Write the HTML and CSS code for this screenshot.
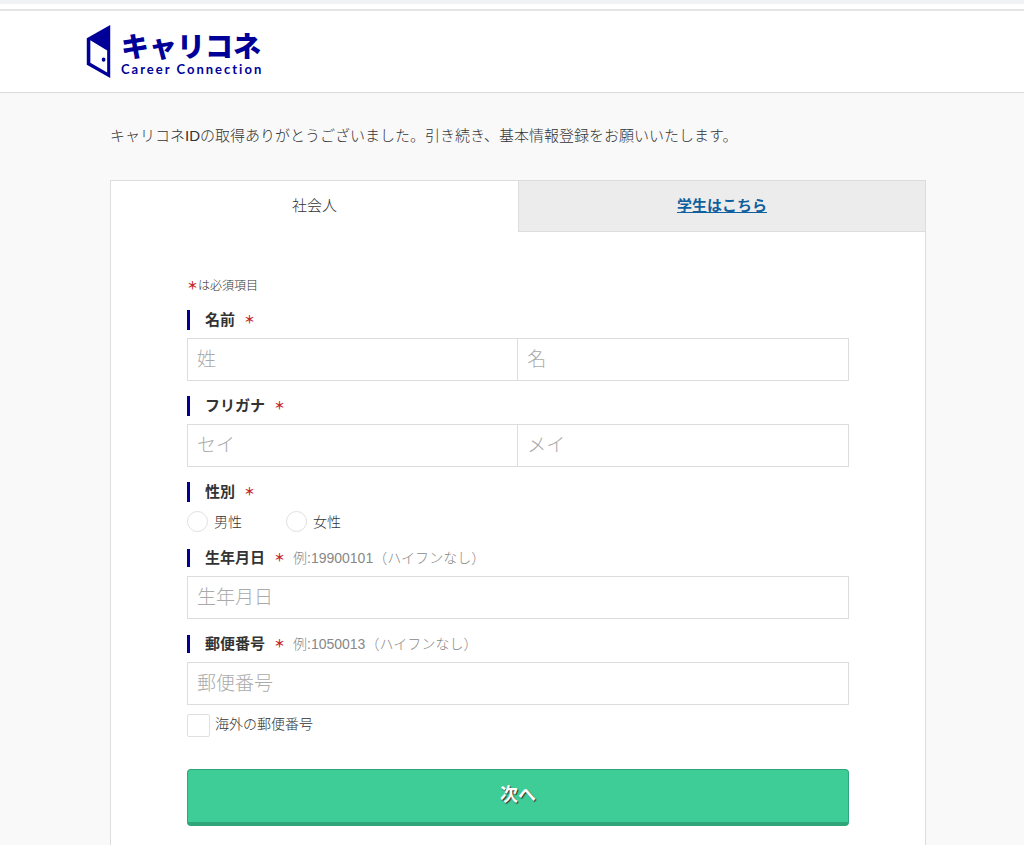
FILE: index.html
```html
<!DOCTYPE html>
<html lang="ja">
<head>
<meta charset="utf-8">
<meta name="viewport" content="width=device-width, initial-scale=1">
<title>キャリコネ 基本情報登録</title>
<link rel="stylesheet" href="styles.css">
</head>
<body>
<div class="top-strip"></div>
<header class="header">
  <a class="logo" href="#">
    <svg class="logo-door" viewBox="0 0 24 52" aria-hidden="true">
      <path fill-rule="evenodd" d="M23.500 0V52L0.500 39V13ZM4 15V37L20.500 46.500V25Z"/>
      <ellipse cx="17" cy="34" rx="1.800" ry="2.100"/>
    </svg>
    <span class="logo-text">
      <span class="logo-name">キャリコネ</span>
      <span class="logo-sub">Career Connection</span>
    </span>
  </a>
</header>
<main class="page">
  <p class="intro">キャリコネIDの取得ありがとうございました。引き続き、基本情報登録をお願いいたします。</p>
  <div class="panel">
    <nav class="tabs">
      <span class="tab tab-current">社会人</span>
      <span class="tab tab-other"><a href="#">学生はこちら</a></span>
    </nav>
    <form class="form">
      <p class="note"><span class="req">＊</span>は必須項目</p>

      <div class="field">
        <label class="field-title" for="sei">名前<span class="req">＊</span></label>
        <div class="pair">
          <input class="text" id="sei" type="text" placeholder="姓">
          <input class="text" type="text" placeholder="名" aria-label="名">
        </div>
      </div>

      <div class="field">
        <label class="field-title" for="sei-kana">フリガナ<span class="req">＊</span></label>
        <div class="pair">
          <input class="text" id="sei-kana" type="text" placeholder="セイ">
          <input class="text" type="text" placeholder="メイ" aria-label="メイ">
        </div>
      </div>

      <div class="field field-sex" role="radiogroup" aria-labelledby="sex-title">
        <div class="field-title" id="sex-title">性別<span class="req">＊</span></div>
        <div class="radios">
          <label class="choice"><input class="radio" type="radio" name="sex">男性</label>
          <label class="choice"><input class="radio" type="radio" name="sex">女性</label>
        </div>
      </div>

      <div class="field field-hinted">
        <label class="field-title" for="birth">生年月日<span class="req">＊</span><span class="hint">例:19900101（ハイフンなし）</span></label>
        <input class="text" id="birth" type="text" placeholder="生年月日">
      </div>

      <div class="field field-hinted">
        <label class="field-title" for="zip">郵便番号<span class="req">＊</span><span class="hint">例:1050013（ハイフンなし）</span></label>
        <input class="text" id="zip" type="text" placeholder="郵便番号">
        <label class="overseas"><input class="check" type="checkbox">海外の郵便番号</label>
      </div>

      <button class="submit" type="submit">次へ</button>
    </form>
  </div>
</main>
</body>
</html>
```
FILE: styles.css
```css
* {
  box-sizing: border-box;
}

body {
  margin: 0;
  background: #f9f9f9;
  color: #333;
  font-family: "Liberation Sans", "Noto Sans CJK JP", sans-serif;
  font-size: 15px;
  font-weight: 300;
  line-height: 20px;
}

.top-strip {
  height: 11px;
  border-top: 4px solid #f1f2f4;
  border-bottom: 2px solid #e4e5e7;
  background: #fff;
}

.header {
  padding: 14px 86px;
  border-bottom: 1px solid #d9d9d9;
  background: #fff;
}

.logo {
  display: inline-flex;
  align-items: center;
  gap: 10px;
  height: 53px;
  color: #000099;
  text-decoration: none;
  vertical-align: top;
}

.logo-door {
  width: 25px;
  height: 53px;
  fill: #000099;
}

.logo-text {
  display: flex;
  flex-direction: column;
}

.logo-name {
  font-family: "Noto Sans CJK JP", sans-serif;
  font-size: 28px;
  font-weight: 900;
  line-height: 34px;
}

.logo-sub {
  font-family: Lato, sans-serif;
  font-size: 13px;
  font-weight: 700;
  letter-spacing: 2px;
  line-height: 14px;
}

.page {
  padding: 33px 98px 0 110px;
}

.intro {
  margin: 0 0 34px;
}

.panel {
  border: 1px solid #ddd;
  border-bottom: 0;
  background: #fff;
}

.tabs {
  display: grid;
  grid-template-columns: 1fr 1fr;
  line-height: 50px;
  text-align: center;
}

.tab-other {
  border-left: 1px solid #ddd;
  border-bottom: 1px solid #ddd;
  background: #ececec;
  font-weight: 700;
}

.tab-other a {
  color: #105f9e;
}

.form {
  padding: 44px 76px;
}

.note {
  margin: 0 0 14px;
  font-size: 12px;
}

.req {
  color: #c62828;
  font-size: 11px;
  font-weight: 700;
}

.field {
  margin-bottom: 15px;
}

.field-title {
  display: flex;
  align-items: center;
  height: 20px;
  margin-bottom: 8px;
  padding-left: 15px;
  border-left: 3px solid #000099;
  color: #333;
  font-weight: 700;
}

.field-title .req {
  margin-left: 9px;
}

.hint {
  margin-left: 8px;
  color: #888;
  font-size: 14px;
  font-weight: 300;
}

.pair {
  display: flex;
}

.text {
  display: block;
  width: 100%;
  height: 43px;
  margin: 0;
  padding: 0 9px;
  border: 1px solid #ddd;
  border-radius: 0;
  background: #fff;
  color: #444;
  font: inherit;
  font-size: 19px;
}

.pair .text + .text {
  border-left: 0;
}

.text::placeholder {
  color: #aaa;
}

.field-sex {
  margin-bottom: 17px;
}

.radios {
  display: flex;
  gap: 44px;
  padding-top: 1px;
}

.choice {
  display: flex;
  align-items: center;
  gap: 6px;
  font-size: 14px;
}

.radio,
.check {
  flex: none;
  appearance: none;
  margin: 0;
  border: 1px solid #e0e0e0;
  background: #fff;
}

.radio {
  width: 21px;
  height: 21px;
  border-radius: 50%;
}

.check {
  width: 23px;
  height: 23px;
  border-radius: 2px;
}

.radio:checked,
.check:checked {
  background: #000099;
  box-shadow: inset 0 0 0 4px #fff;
}

.field-hinted {
  margin-bottom: 16px;
}

.field-hinted .field-title {
  height: 18px;
  margin-bottom: 9px;
}

.overseas {
  display: flex;
  gap: 5px;
  width: fit-content;
  margin-top: 9px;
  font-size: 14px;
}

.submit {
  display: block;
  width: 100%;
  height: 57px;
  margin-top: 32px;
  padding: 0 0 2px;
  border: 1px solid #2fa67a;
  border-bottom-width: 4px;
  border-radius: 4px;
  background: #3ecc97;
  color: #fff;
  font: inherit;
  font-size: 18px;
  font-weight: 700;
  text-shadow: 1px 1px 1px #333;
}
```
